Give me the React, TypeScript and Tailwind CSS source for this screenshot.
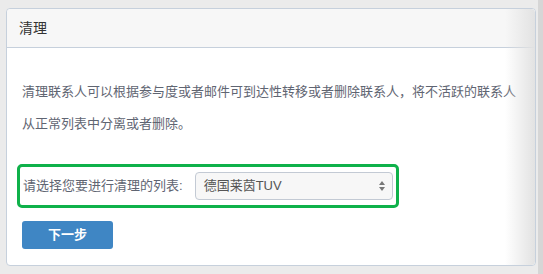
export default function App() {
  return (
    <div
      className="relative w-[543px] h-[274px] bg-[#ebebeb] pt-[8px] pl-[6px] overflow-hidden"
      style={{ fontFamily: '"Liberation Sans", "Noto Sans CJK SC", sans-serif' }}
    >
      {/* card */}
      <div className="relative w-[530px] h-[258px] bg-white border border-[#c6d0dc] rounded-[4px] flex flex-col">
        <div className="h-[39px] bg-[#f7f7f7] border-b border-[#c6d0dc] rounded-t-[4px] flex items-center pl-[12px] text-[14px] text-[#333]">
          清理
        </div>
        <div className="flex flex-col pt-[28px] pl-[15px] text-[13px] text-[#5f6572]">
          <p className="leading-[32px] h-[32px]">
            清理联系人可以根据参与度或者邮件可到达性转移或者删除联系人，将不活跃的联系人
          </p>
          <p className="leading-[32px] h-[32px]">从正常列表中分离或者删除。</p>
        </div>
        <div className="ml-[10px] mt-[24px] w-[382px] h-[44px] border-[3px] border-[#0fb14a] rounded-[5px] flex items-center pl-[3px] gap-[12px]">
          <span className="text-[13px] text-[#5f6572]">请选择您要进行清理的列表:</span>
          <div className="w-[198px] h-[28px] bg-[#f7f7f7] border border-[#c3cad4] rounded-[4px] flex items-center justify-between pl-[8px] pr-[6px] text-[13px] text-[#555]">
            <span>德国莱茵TUV</span>
            <svg width="8" height="12" viewBox="0 0 8 12">
              <path d="M4 1L7 5H1z" fill="#777" />
              <path d="M4 11L7 7H1z" fill="#777" />
            </svg>
          </div>
        </div>
        <button className="ml-[15px] mt-[13px] w-[91px] h-[28px] bg-[#3f86c4] rounded-[3px] text-white text-[13px] font-bold">
          下一步
        </button>
        {/* right edge shade */}
        <div className="absolute top-0 right-0 w-[30px] h-full bg-gradient-to-r from-transparent to-[#e2e2e2] rounded-r-[4px] pointer-events-none" />
      </div>
      {/* scrollbar strip */}
      <div className="absolute top-0 right-0 w-[5px] h-full bg-[#d6d6d6]" />
    </div>
  )
}
